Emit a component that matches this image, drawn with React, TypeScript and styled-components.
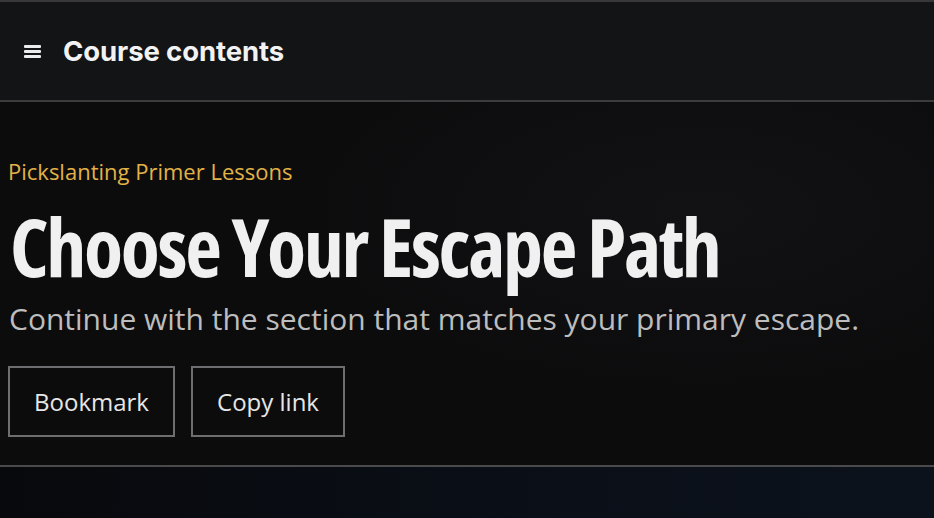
import styled, { createGlobalStyle } from 'styled-components'

//////////////////////////////////////////////////////////////////////

const GlobalStyle = createGlobalStyle`
    html, body {
        margin: 0;
        padding: 0;
        background: #0b0b0c;
    }
    * { box-sizing: border-box; }
`

const Page = styled.div`
    width: 100%;
    height: 518px;

    display: flex;
    flex-direction: column;

    overflow: hidden;

    background: #0b0b0c;
`

const TopBar = styled.header`
    height: 102px;
    padding: 0 24px;

    display: flex;
    align-items: center;
    gap: 22px;

    flex-shrink: 0;

    background: #131416;
    border-top: 2px solid #38383a;
    border-bottom: 2px solid #3c3c3e;
`

const MenuIcon = styled.span`
    width: 17px;
    height: 13px;

    display: flex;
    flex-direction: column;
    justify-content: space-between;

    span {
        height: 3px;
        background: #ececec;
        border-radius: 1px;
    }
`

const BarTitle = styled.h2`
    margin: 0;

    font-family: Inter, "Liberation Sans", sans-serif;
    font-size: 27.5px;
    font-weight: 700;
    letter-spacing: -0.1px;
    color: #f2f2f2;
`

const Hero = styled.section`
    height: 365px;
    padding: 54px 8px 0;

    flex-shrink: 0;

    background: radial-gradient(ellipse 60% 70% at 75% 30%, #121215 0%, #0c0c0d 70%);
    border-bottom: 2px solid #4a4a4c;

    font-family: "Open Sans", sans-serif;
`

const Kicker = styled.div`
    font-size: 22px;
    line-height: 30px;
    color: #e2b246;
`

const Heading = styled.h1`
    margin: 15px 0 0 2px;

    font-family: "Open Sans", sans-serif;
    font-stretch: 75%;
    font-size: 80px;
    font-weight: 700;
    line-height: 90px;
    letter-spacing: -2.3px;
    color: #f0f0f0;
`

const Subtitle = styled.p`
    margin: 8px 0 0 1px;

    font-size: 30px;
    line-height: 40px;
    color: #bdbdbd;
`

const Actions = styled.div`
    margin-top: 27px;

    display: flex;
    gap: 16px;
`

const Button = styled.button<{ $width: number }>`
    width: ${({ $width }) => $width}px;
    height: 71px;

    display: flex;
    justify-content: center;
    align-items: center;

    background: transparent;
    border: 2px solid #6e6e70;
    border-radius: 0;

    font-family: "Open Sans", sans-serif;
    font-size: 24px;
    color: #e6e6e6;

    cursor: pointer;
`

const Lower = styled.div`
    flex: 1;

    background: linear-gradient(to right, #08090c 0%, #0a0f18 60%, #0c121b 100%);
`

//////////////////////////////////////////////////////////////////////

function App() {
    return (
        <Page>
            <GlobalStyle />
            <TopBar>
                <MenuIcon><span /><span /><span /></MenuIcon>
                <BarTitle>Course contents</BarTitle>
            </TopBar>

            <Hero>
                <Kicker>Pickslanting Primer Lessons</Kicker>
                <Heading>Choose Your Escape Path</Heading>
                <Subtitle>Continue with the section that matches your primary escape.</Subtitle>
                <Actions>
                    <Button $width={167}>Bookmark</Button>
                    <Button $width={154}>Copy link</Button>
                </Actions>
            </Hero>

            <Lower />
        </Page>
    )
}

export default App
